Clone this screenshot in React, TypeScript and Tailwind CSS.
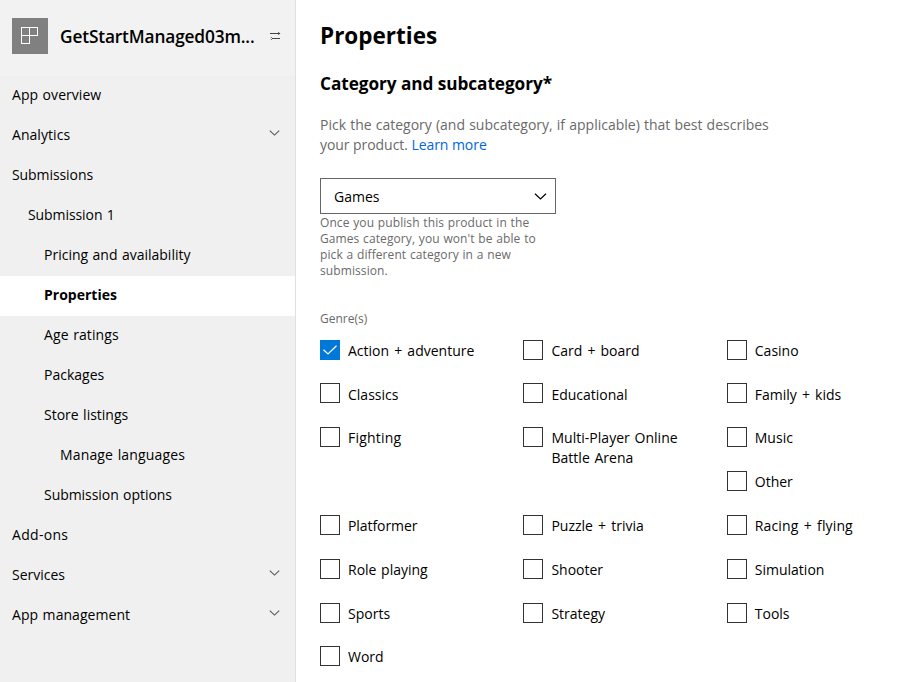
import React from "react";

type NavItem = { label: string; pad: string; chevron?: boolean; active?: boolean; fit?: string };

const nav: NavItem[] = [
  { label: "App overview", pad: "pl-3", fit: "tracking-[0.05px]" },
  { label: "Analytics", pad: "pl-3", chevron: true, fit: "tracking-[0.05px]" },
  { label: "Submissions", pad: "pl-3", fit: "tracking-[-0.08px]" },
  { label: "Submission 1", pad: "pl-7", fit: "tracking-[-0.08px]" },
  { label: "Pricing and availability", pad: "pl-11" },
  { label: "Properties", pad: "pl-11", active: true },
  { label: "Age ratings", pad: "pl-11", fit: "tracking-[0.1px]" },
  { label: "Packages", pad: "pl-11" },
  { label: "Store listings", pad: "pl-11" },
  { label: "Manage languages", pad: "pl-[60px]", fit: "tracking-[0.15px]" },
  { label: "Submission options", pad: "pl-11", fit: "tracking-[-0.05px]" },
  { label: "Add-ons", pad: "pl-3", fit: "tracking-[0.3px]" },
  { label: "Services", pad: "pl-3", chevron: true },
  { label: "App management", pad: "pl-3", chevron: true, fit: "tracking-[0.05px]" },
];

type Genre = { label: React.ReactNode; place: string; checked?: boolean; fit?: string };

const genres: Genre[] = [
  { label: "Action + adventure", place: "col-start-1 row-start-1", checked: true },
  { label: "Card + board", place: "col-start-2 row-start-1" },
  { label: "Casino", place: "col-start-3 row-start-1" },
  { label: "Classics", place: "col-start-1 row-start-2" },
  { label: "Educational", place: "col-start-2 row-start-2" },
  { label: "Family + kids", place: "col-start-3 row-start-2" },
  { label: "Fighting", place: "col-start-1 row-start-3", fit: "tracking-[0.2px]" },
  { label: <>Multi-Player Online<br />Battle Arena</>, place: "col-start-2 row-start-3", fit: "tracking-[0.03px]" },
  { label: "Music", place: "col-start-3 row-start-3" },
  { label: "Other", place: "col-start-3 row-start-4" },
  { label: "Platformer", place: "col-start-1 row-start-5", fit: "tracking-[-0.08px]" },
  { label: "Puzzle + trivia", place: "col-start-2 row-start-5" },
  { label: "Racing + flying", place: "col-start-3 row-start-5", fit: "tracking-[0.13px]" },
  { label: "Role playing", place: "col-start-1 row-start-6" },
  { label: "Shooter", place: "col-start-2 row-start-6" },
  { label: "Simulation", place: "col-start-3 row-start-6" },
  { label: "Sports", place: "col-start-1 row-start-7" },
  { label: "Strategy", place: "col-start-2 row-start-7" },
  { label: "Tools", place: "col-start-3 row-start-7" },
  { label: "Word", place: "col-start-1 row-start-8" },
];

function Chevron({ className }: { className: string }) {
  return (
    <svg className={className} viewBox="0 0 12 7" fill="none" stroke="currentColor" strokeWidth="1.2">
      <path d="M0.5 0.7 L6 6 L11.5 0.7" />
    </svg>
  );
}

function Sidebar() {
  return (
    <aside className="flex w-[296px] shrink-0 flex-col border-r border-[#e0e0e0] bg-[#f0f0f0]">
      <header className="flex h-[76px] items-start bg-[#f2f2f2] pt-[18px] pl-3">
        <div className="flex size-9 shrink-0 items-center justify-center bg-[#808080]">
          <svg className="size-[18px]" viewBox="0 0 18 18" fill="none" stroke="#fff" strokeWidth="1" shapeRendering="crispEdges">
            <path d="M0.5 0.5 H16.5 V8.5 H8.5 V16.5 H0.5 Z M8.5 0.5 V8.5 M0.5 8.5 H8.5" />
          </svg>
        </div>
        <div className="ml-3 w-[196px] pt-[7px] text-[17.3px] leading-6 font-semibold tracking-[-0.15px] whitespace-nowrap">
          GetStartManaged03m...
        </div>
        <svg className="mt-[13px] ml-[14px] h-[10px] w-[11px] shrink-0 text-[#444]" viewBox="0 0 11 10" fill="currentColor">
          <path d="M0 2 H10 V3 H0 Z M8 1 L10.5 2.5 L8 4 Z M0 7 H10 V8 H0 Z M2 6 L-0.5 7.5 L2 9 Z" />
        </svg>
      </header>
      <nav>
        {nav.map((n) => (
          <a
            key={n.label}
            className={`flex h-10 items-center justify-between pr-[15px] text-[14px] leading-5 [word-spacing:0.8px] ${n.pad} ${n.active ? "bg-white font-bold" : ""}`}
          >
            <span className={`pb-[2px] ${n.fit ?? ""}`}>{n.label}</span>
            {n.chevron && <Chevron className="mb-[6px] h-[6px] w-[11px] text-[#555]" />}
          </a>
        ))}
      </nav>
    </aside>
  );
}

function GenreBox({ genre }: { genre: Genre }) {
  const plus = typeof genre.label === "string" && genre.label.includes("+");
  return (
    <label className={`flex items-start gap-2 ${genre.place}`}>
      <span
        className={`flex size-5 shrink-0 items-center justify-center border ${
          genre.checked ? "border-[#0078d7] bg-[#0078d7]" : "border-[#333] bg-white"
        }`}
      >
        {genre.checked && (
          <svg className="h-[10px] w-[14px] shrink-0" viewBox="0 0 14 10" fill="none" stroke="#fff" strokeWidth="1.2">
            <path d="M0.5 4.8 L5 9 L13.5 0.7" />
          </svg>
        )}
      </span>
      <span
        className={`pt-[1.1px] text-[14px] leading-5 whitespace-nowrap ${plus ? "[word-spacing:1.5px]" : "[word-spacing:1px]"} ${genre.fit ?? ""}`}
      >
        {genre.label}
      </span>
    </label>
  );
}

export default function App() {
  return (
    <div className="flex h-[682px] w-[899px] overflow-hidden bg-white font-['Open_Sans',sans-serif] text-black">
      <Sidebar />
      <main className="flex flex-col pl-6">
        <h1 className="mt-5 text-[22.5px] leading-8 font-bold">Properties</h1>
        <h2 className="mt-5 text-[17.2px] leading-6 font-bold tracking-[-0.05px]">Category and subcategory*</h2>
        <p className="mt-[19px] text-[14px] leading-5 whitespace-nowrap text-[#6a6a6a] [word-spacing:0.5px]">
          Pick the category (and subcategory, if applicable) that best describes
          <br />
          <span className="tracking-[-0.06px] [word-spacing:0px]">
            your product. <a className="text-[#0066dd]">Learn more</a>
          </span>
        </p>
        <div className="mt-[23px] flex h-9 w-[236px] shrink-0 items-center justify-between border border-[#666] pr-2 pl-[13px]">
          <span className="pt-[2px] text-[14px] leading-5">Games</span>
          <Chevron className="h-[7px] w-[13px]" />
        </div>
        <p className="mt-px text-[12px] leading-4 tracking-[0.09px] whitespace-nowrap text-[#6a6a6a] [word-spacing:0.5px]">
          Once you publish this product in the
          <br />
          Games category, you won't be able to
          <br />
          pick a different category in a new
          <br />
          submission.
        </p>
        <div className="mt-8 text-[12px] leading-4 text-[#6a6a6a]">Genre(s)</div>
        <div className="mt-[12.6px] grid auto-rows-[43.83px] grid-cols-[203.4px_203.4px_160px]">
          {genres.map((g) => (
            <GenreBox key={g.place} genre={g} />
          ))}
        </div>
      </main>
    </div>
  );
}
